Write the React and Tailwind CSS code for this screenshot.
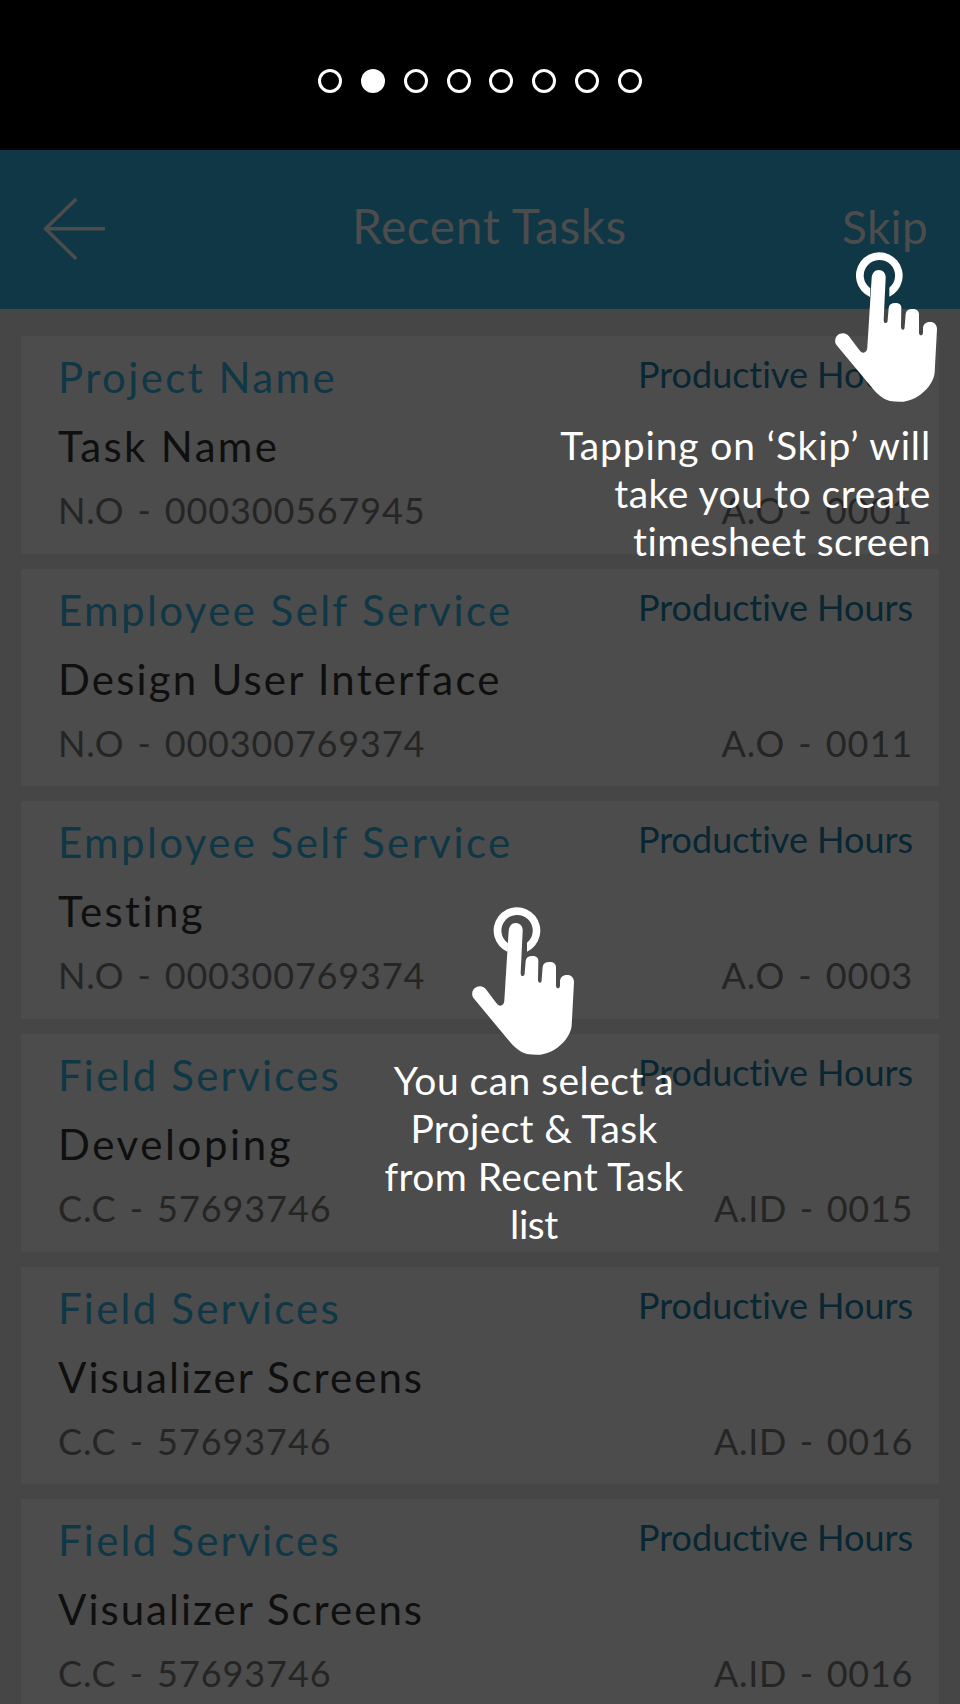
import React from "react";

const NUM_A = "tracking-[0.93px]";
const NUM_B = "tracking-[0.67px]";

const tasks = [
  { project: "Project Name", projectClass: "tracking-[2.4px]", task: "Task Name", taskClass: "tracking-[2.34px]", order: "N.O - 000300567945", orderClass: "tracking-[0.84px]", activity: "A.O - 0001", activityClass: NUM_A },
  { project: "Employee Self Service", projectClass: "tracking-[2.4px]", task: "Design User Interface", taskClass: "tracking-[2.18px]", order: "N.O - 000300769374", orderClass: "tracking-[0.82px]", activity: "A.O - 0011", activityClass: NUM_A },
  { project: "Employee Self Service", projectClass: "tracking-[2.4px]", task: "Testing", taskClass: "tracking-[2.35px]", order: "N.O - 000300769374", orderClass: "tracking-[0.82px]", activity: "A.O - 0003", activityClass: NUM_A },
  { project: "Field Services", projectClass: "tracking-[2.2px]", task: "Developing", taskClass: "tracking-[2.6px]", order: "C.C - 57693746", orderClass: "tracking-[0.92px]", activity: "A.ID - 0015", activityClass: NUM_B },
  { project: "Field Services", projectClass: "tracking-[2.2px]", task: "Visualizer Screens", taskClass: "tracking-[2px]", order: "C.C - 57693746", orderClass: "tracking-[0.92px]", activity: "A.ID - 0016", activityClass: NUM_B },
  { project: "Field Services", projectClass: "tracking-[2.2px]", task: "Visualizer Screens", taskClass: "tracking-[2px]", order: "C.C - 57693746", orderClass: "tracking-[0.92px]", activity: "A.ID - 0016", activityClass: NUM_B },
];

function PageDots({ count, active }) {
  return (
    <div className="flex h-[150px] shrink-0 justify-center bg-black pt-[69px]">
      <div className="flex h-6 w-[324px] justify-between">
        {Array.from({ length: count }, (_, i) => (
          <span
            key={i}
            className={
              i === active
                ? "size-6 rounded-full bg-white"
                : "size-6 rounded-full border-3 border-white"
            }
          />
        ))}
      </div>
    </div>
  );
}

function Header() {
  return (
    <header className="flex h-[159px] shrink-0 items-start bg-[#0f3746] pl-[43px] pr-8 text-[#4c4c4c]">
      <svg className="mt-[48px] h-[62px] w-[63px]" viewBox="0 0 63 62" fill="none" stroke="currentColor" strokeWidth="3.6">
        <path d="M33.3 1 2.5 30.7 33.3 61" strokeLinejoin="round" />
        <path d="M3 30.7H62" />
      </svg>
      <h1 className="ml-[246px] mt-[46px] text-[48px] leading-[60px] tracking-[0.5px]">Recent Tasks</h1>
      <button className="ml-auto mt-[47px] text-[46px] leading-[60px] tracking-[0.3px]">Skip</button>
    </header>
  );
}

function TaskCard({ item }) {
  return (
    <li className="flex h-[217.66px] shrink-0 flex-col bg-[#4c4c4c] pl-[37px] pr-[26px] pt-[17px]">
      <div className="flex items-start justify-between">
        <span className={"text-[42px] leading-[48px] text-[#0f3746] " + item.projectClass}>{item.project}</span>
        <span className="-mt-[3px] text-[36px] leading-[48px] tracking-[-0.02px] text-[#082733]">Productive Hours</span>
      </div>
      <span className={"mt-[21px] text-[42px] leading-[48px] text-[#0f0f0f] " + item.taskClass}>{item.task}</span>
      <div className="mt-[18px] flex justify-between text-[36px] leading-[44px] text-[#252525] [word-spacing:3px]">
        <span className={item.orderClass}>{item.order}</span>
        <span className={item.activityClass}>{item.activity}</span>
      </div>
    </li>
  );
}

function TapHand({ lowered = false }) {
  return (
    <svg className="h-[150px] w-[102px] overflow-visible" viewBox="0 0 306 450" fill="white">
      <path
        transform={lowered ? "translate(-2 0)" : undefined}
        d="M107 135A70 70 0 1 1 165 134V107A47 47 0 1 0 108 109Z"
      />
      <path
        transform={lowered ? "translate(0 6)" : undefined}
        d="M110 72C111 58 119 48 131 48C144 48 153 58 152 72L146 197C146 204 148 207 152 207C156 207 158 204 158 198L161 162C162 152 169 147 181 147C193 147 199 152 199 162L198 217C198 224 200 227 204 227C208 227 209 224 209 217L212 180C213 170 220 165 232 165C246 165 252 171 252 182L252 234C252 241 254 244 258 244C262 244 264 241 264 235V224C264 212 272 204 285 204C298 204 306 212 306 226L299 355C297 392 254 437 206 443C191 444 179 443 165 441C147 437 134 426 120 412L5 274C-4 262 1 244 15 239C26 235 37 239 43 248L70 284C75 291 80 296 85 296C91 296 97 290 97 279L106 135Z"
      />
    </svg>
  );
}

export default function App() {
  return (
    <div className="relative flex h-[1704px] w-[960px] flex-col overflow-hidden whitespace-nowrap bg-[#464646] font-['Lato',sans-serif]">
      <PageDots count={8} active={1} />
      <Header />
      <ul className="flex flex-col gap-[15px] pl-[21px] pr-[21px] pt-[27px]">
        {tasks.map((item, i) => (
          <TaskCard key={i} item={item} />
        ))}
      </ul>

      <div className="absolute right-[23px] top-[252px]">
        <TapHand lowered />
      </div>
      <p className="absolute right-[29px] top-[421px] text-right text-[39px] leading-[48px] text-white">
        <span className="block tracking-[0.86px]">Tapping on ‘Skip’ will</span>
        <span className="block tracking-[0.53px]">take you to create</span>
        <span className="block tracking-[0.4px]">timesheet screen</span>
      </p>

      <div className="absolute left-[472px] top-[907px]">
        <TapHand />
      </div>
      <p className="absolute left-[374px] top-[1056px] w-[320px] text-center text-[39px] leading-[48px] text-white">
        <span className="block tracking-[0.47px]">You can select a</span>
        <span className="block tracking-[0.35px]">Project &amp; Task</span>
        <span className="block tracking-[0.4px]">from Recent Task</span>
        <span className="block tracking-[-0.4px]">list</span>
      </p>
    </div>
  );
}
